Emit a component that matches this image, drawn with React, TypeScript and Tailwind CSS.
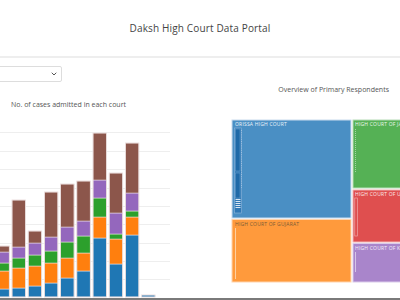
import { ChevronDown } from "lucide-react"

type Stack = { blue: number; orange: number; green: number; purple: number; brown: number }

// segment heights in px, bottom to top
const bars: Stack[] = [
  { blue: 8, orange: 18, green: 8, purple: 11, brown: 6 },
  { blue: 9, orange: 20, green: 10, purple: 11, brown: 47 },
  { blue: 11, orange: 20, green: 11, purple: 12, brown: 12 },
  { blue: 14, orange: 20, green: 12, purple: 14, brown: 45 },
  { blue: 19, orange: 20, green: 16, purple: 15, brown: 43 },
  { blue: 26, orange: 18, green: 17, purple: 15, brown: 40 },
  { blue: 59, orange: 21, green: 19, purple: 18, brown: 47 },
  { blue: 33, orange: 25, green: 5, purple: 21, brown: 40 },
  { blue: 62, orange: 18, green: 6, purple: 18, brown: 50 },
  { blue: 2, orange: 0, green: 0, purple: 0, brown: 0 },
]

const colors: Record<keyof Stack, string> = {
  blue: "#1f77b4",
  orange: "#ff7f0e",
  green: "#2ca02c",
  purple: "#9467bd",
  brown: "#8c564b",
}

const order: (keyof Stack)[] = ["blue", "orange", "green", "purple", "brown"]

function BarChart() {
  // svg origin sits at page y=110, baseline at 297
  const base = 187
  const grid = [132, 151, 169, 188, 206, 224, 243, 261, 279]
  return (
    <svg width="200" height="188" className="block">
      {grid.map((g) => (
        <line key={g} x1="0" x2="170" y1={g - 110 + 0.5} y2={g - 110 + 0.5} stroke="#eeeeee" strokeWidth="1" />
      ))}
      {bars.map((b, i) => {
        const x = -4.2 + i * 16.2
        let y = base
        const total = order.reduce((s, k) => s + b[k], 0)
        return (
          <g key={i}>
            {order.map((k) => {
              const h = b[k]
              if (!h) return null
              y -= h
              return <rect key={k} x={x} y={y} width={13.5} height={h} fill={colors[k]} stroke="#f3e8e8" strokeWidth="0.5" />
            })}
            <rect x={x} y={base - total} width={13.5} height={total} fill="none" stroke="#eadede" strokeWidth="0.8" />
          </g>
        )
      })}
    </svg>
  )
}

function Treemap() {
  const label = { fontSize: 5, fontFamily: "'Open Sans', 'DejaVu Sans', sans-serif", letterSpacing: 0.2 }
  return (
    <svg width="170" height="164" className="block overflow-visible">
      {/* Orissa */}
      <rect x="0" y="0" width="119" height="98" fill="#4a8fc4" stroke="#c9dcee" strokeWidth="1" />
      <text x="3" y="6" fill="#eef4fa" style={label}>ORISSA HIGH COURT</text>
      <rect x="2.5" y="8" width="7" height="85" fill="#2f78b5" stroke="#8fb7db" strokeWidth="0.6" />
      <rect x="3.5" y="9" width="4.5" height="42" fill="#1f6aa8" stroke="#6fa2cf" strokeWidth="0.5" />
      <rect x="3.5" y="53" width="4.5" height="25" fill="#1f6aa8" stroke="#6fa2cf" strokeWidth="0.5" />
      {[79, 81, 83, 85, 87].map((y) => (
        <rect key={y} x="3.5" y={y} width="5" height="1" fill="#d8e6f3" />
      ))}
      <line x1="9.5" x2="9.5" y1="10" y2="68" stroke="#a9c8e4" strokeWidth="0.8" strokeDasharray="1 1.2" />

      {/* Gujarat */}
      <rect x="0" y="99.5" width="119" height="62.5" fill="#ff9a3c" stroke="#ffd4ad" strokeWidth="1" />
      <text x="3" y="106" fill="#7a5a36" style={label}>HIGH COURT OF GUJARAT</text>
      <line x1="3.5" x2="3.5" y1="108" y2="159" stroke="#ffcf9f" strokeWidth="1" />

      {/* Jammu */}
      <rect x="121" y="0" width="60" height="68" fill="#55b155" stroke="#b6dcb6" strokeWidth="1" />
      <text x="123" y="6" fill="#eef7ee" style={label}>HIGH COURT OF JAMMU AND KASHMIR</text>
      <line x1="123.5" x2="123.5" y1="9" y2="52" stroke="#a6d5a6" strokeWidth="1" strokeDasharray="1 1" />

      {/* Uttarakhand */}
      <rect x="121" y="70" width="60" height="52" fill="#df4f4f" stroke="#f0b2b2" strokeWidth="1" />
      <text x="123" y="76" fill="#fbeaea" style={label}>HIGH COURT OF UTTARAKHAND</text>
      <rect x="122.8" y="78" width="2.5" height="38" fill="none" stroke="#f2b5b5" strokeWidth="0.6" />

      {/* Kerala */}
      <rect x="121" y="123.5" width="60" height="38.5" fill="#a985cb" stroke="#dacbea" strokeWidth="1" />
      <text x="123" y="130" fill="#f4eefa" style={label}>HIGH COURT OF KERALA</text>
      <line x1="123.5" x2="123.5" y1="132" y2="152" stroke="#d5c5e8" strokeWidth="1" />
    </svg>
  )
}

export default function App() {
  return (
    <div className="w-[400px] h-[300px] overflow-hidden bg-white font-['Open_Sans','DejaVu_Sans',sans-serif] text-[#444]">
      <div className="h-[56px] flex items-center justify-center">
        <h1 className="text-[10px] tracking-[0.15px] text-[#444]">Daksh High Court Data Portal</h1>
      </div>
      <div className="h-[2px] bg-[#eeeeee]" />

      <div className="flex h-[240px]">
        <div className="w-[200px] flex flex-col">
          <div className="mt-[8px] ml-[-2px] h-[16px] w-[64px] border border-[#dddddd] rounded-[2px] flex items-center justify-end pr-[3px]">
            <ChevronDown className="w-[8px] h-[8px] text-[#555]" strokeWidth={3} />
          </div>
          <div className="mt-[18px] pl-[11px] text-[7px] leading-[9px] text-[#555]">No. of cases admitted in each court</div>
          <div className="mt-[1px]">
            <BarChart />
          </div>
        </div>

        <div className="flex-1 flex flex-col">
          <div className="mt-[27px] pr-[13px] text-right text-[7px] leading-[9px] text-[#555]">
            Overview of Primary Respondents
          </div>
          <div className="mt-[26px] ml-[32px]">
            <Treemap />
          </div>
        </div>
      </div>

      <div className="h-[2px] bg-[#7a7a7a]" />
    </div>
  )
}
